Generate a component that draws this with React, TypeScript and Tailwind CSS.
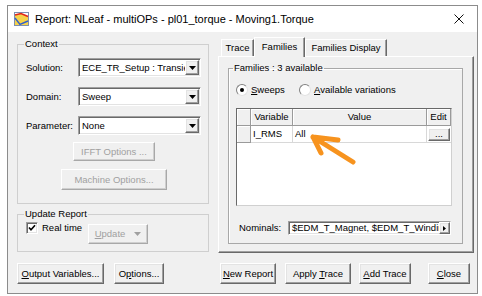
import React from 'react';

const font = "font-['Liberation_Sans',Arial,sans-serif]";

type BoxProps = { className?: string; children?: React.ReactNode; disabled?: boolean };

// classic 3D raised face (buttons, dropdown arrows, header cells)
const Raised = ({ className = '', children, disabled = false }: BoxProps) => (
  <div
    className={`flex items-center justify-center bg-[#f0f0f0] border border-t-white border-l-white whitespace-nowrap ${
      disabled
        ? 'border-r-[#a8a8a8] border-b-[#a8a8a8] shadow-[inset_-1px_-1px_0_#cfcfcf] text-[#a0a0a0]'
        : 'border-r-[#696969] border-b-[#696969] shadow-[inset_-1px_-1px_0_#a0a0a0,inset_1px_1px_0_#e3e3e3]'
    } ${className}`}
  >
    {children}
  </div>
);

const Sunken = ({ className = '', children }: BoxProps) => (
  <div
    className={`bg-white border border-t-[#a0a0a0] border-l-[#a0a0a0] border-r-white border-b-white shadow-[inset_1px_1px_0_#696969,inset_-1px_-1px_0_#e3e3e3] ${className}`}
  >
    {children}
  </div>
);

const DownTri = ({ color = '#000' }: { color?: string }) => (
  <svg width="7" height="4" viewBox="0 0 7 4">
    <polygon points="0,0 7,0 3.5,4" fill={color} />
  </svg>
);

const Combo = ({ value }: { value: string }) => (
  <Sunken className="w-[123px] h-[19px] flex items-center">
    <span className="flex-1 overflow-hidden whitespace-nowrap pl-[3px] leading-[14px]">{value}</span>
    <Raised className="w-[14px] h-[15px] mr-[1px] shrink-0">
      <DownTri />
    </Raised>
  </Sunken>
);

const Radio = ({ checked }: { checked?: boolean }) => (
  <div className="w-[12px] h-[12px] rounded-full bg-white border border-t-[#808080] border-l-[#808080] border-r-[#e3e3e3] border-b-[#e3e3e3] flex items-center justify-center shrink-0">
    {checked && <div className="w-[4px] h-[4px] rounded-full bg-black" />}
  </div>
);

const HeadCell = ({ className = '', children }: BoxProps) => (
  <div className={`h-full flex items-center justify-center bg-[#f0f0f0] border-r border-b border-[#9a9a9a] shadow-[inset_1px_1px_0_white] ${className}`}>
    {children}
  </div>
);

const AppIcon = () => (
  <svg width="15" height="14" viewBox="0 0 15 14">
    <rect x="0.5" y="0.5" width="14" height="13" fill="#fff" stroke="#7d8fb0" />
    <path d="M1 3 L7 1.5 L14 4.5 L14 13 L1 13 Z" fill="#f6d34a" />
    <path d="M1 3 L7 1.5 L14 4.5" stroke="#e0261b" strokeWidth="1.6" fill="none" />
    <path d="M1 6 L6 12.5 L14 9" stroke="#2f5fd0" strokeWidth="1.4" fill="none" />
  </svg>
);

export default function App() {
  return (
    <div className={`relative w-[482px] h-[296px] bg-white pt-[5px] pl-[7px] text-black ${font} text-[9.5px] leading-none`}>
      <div className="w-[471px] h-[289px] border border-[#8c8c8c] flex flex-col">
        {/* Title bar */}
        <div className="h-[26px] bg-white flex items-center pl-[6px] pr-[13px] shrink-0">
          <AppIcon />
          <span className="ml-[6px] text-[11px] flex-1 whitespace-nowrap">
            Report: NLeaf - multiOPs - pl01_torque - Moving1.Torque
          </span>
          <svg width="10" height="10" viewBox="0 0 10 10">
            <path d="M0.5 0.5 L9.5 9.5 M9.5 0.5 L0.5 9.5" stroke="#111" strokeWidth="1" />
          </svg>
        </div>

        <div className="flex-1 bg-[#f0f0f0] flex flex-col">
          <div className="flex h-[221px]">
            {/* Left column */}
            <div className="w-[192px] ml-[9px] flex flex-col">
              <fieldset className="mt-[6px] h-[166px] min-w-0 border border-[#cfcfcf] flex flex-col">
                <legend className="ml-[6px] px-[1px] leading-[12px]">Context</legend>
                <div className="flex items-center h-[19px] mt-[8px] pl-[8px]">
                  <span className="w-[52px]">Solution:</span>
                  <Combo value="ECE_TR_Setup : Transient" />
                </div>
                <div className="flex items-center h-[19px] mt-[10px] pl-[8px]">
                  <span className="w-[52px]">Domain:</span>
                  <Combo value="Sweep" />
                </div>
                <div className="flex items-center h-[19px] mt-[10px] pl-[8px]">
                  <span className="w-[52px]">Parameter:</span>
                  <Combo value="None" />
                </div>
                <Raised disabled className="mt-[7px] ml-[55px] w-[82px] h-[19px]">IFFT Options ...</Raised>
                <Raised disabled className="mt-[8px] ml-[43px] w-[106px] h-[21px]">Machine Options...</Raised>
              </fieldset>

              <fieldset className="mt-[4px] h-[44px] min-w-0 border border-[#cfcfcf] flex flex-col">
                <legend className="ml-[6px] px-[1px] leading-[12px]">Update Report</legend>
                <div className="flex items-start mt-[2px] pl-[8px]">
                  <div className="flex items-center w-[62px] h-[12px]">
                    <Sunken className="w-[12px] h-[12px] flex items-center justify-center shrink-0">
                      <svg width="8" height="8" viewBox="0 0 8 8">
                        <path d="M1 3.5 L3 5.8 L7 1.2" stroke="#000" strokeWidth="1.6" fill="none" />
                      </svg>
                    </Sunken>
                    <span className="ml-[4px] whitespace-nowrap">Real time</span>
                  </div>
                  <Raised disabled className="mt-[2px] w-[60px] h-[20px] gap-[9px]">
                    <span>
                      <u>U</u>pdate
                    </span>
                    <DownTri color="#a0a0a0" />
                  </Raised>
                </div>
              </fieldset>
            </div>

            {/* Right column: tab control */}
            <div className="w-[256px] ml-[9px] flex flex-col">
              <div className="h-[24px] flex items-end pl-[3px] shrink-0">
                <div className="h-[17px] w-[33px] flex items-center justify-center border border-b-0 border-t-white border-l-white border-r-[#696969] shadow-[inset_-1px_0_0_#a0a0a0]">
                  Trace
                </div>
                <div className="relative z-10 -mb-[1px] h-[20px] w-[51px] flex items-start pt-[4px] justify-center bg-[#f0f0f0] border border-b-0 border-t-white border-l-white border-r-[#696969] shadow-[inset_-1px_0_0_#a0a0a0]">
                  Families
                </div>
                <div className="h-[17px] w-[82px] flex items-center justify-center border border-b-0 border-t-white border-l-white border-r-[#696969] shadow-[inset_-1px_0_0_#a0a0a0] whitespace-nowrap">
                  Families Display
                </div>
              </div>

              <div className="h-[197px] border border-t-white border-l-white border-r-[#696969] border-b-[#696969] shadow-[inset_-1px_-1px_0_#a0a0a0] flex flex-col">
                <fieldset className="mt-[5px] ml-[9px] w-[235px] h-[182px] min-w-0 border border-[#a8a8a8] shadow-[inset_1px_1px_0_white] flex flex-col">
                  <legend className="ml-[4px] px-[1px] leading-[12px]">Families : 3 available</legend>

                  <div className="flex items-center h-[12px] mt-[10px] pl-[7px]">
                    <div className="flex items-center w-[63px]">
                      <Radio checked />
                      <span className="ml-[3px]">
                        <u>S</u>weeps
                      </span>
                    </div>
                    <Radio />
                    <span className="ml-[3px] whitespace-nowrap">
                      <u>A</u>vailable variations
                    </span>
                  </div>

                  <div className="ml-[7px] mt-[12px] w-[216px] h-[98px] bg-white border border-t-[#696969] border-l-[#696969] border-r-[#d0d0d0] border-b-[#d0d0d0] flex flex-col">
                    <div className="flex h-[17px]">
                      <HeadCell className="w-[14px]" />
                      <HeadCell className="w-[42px]">Variable</HeadCell>
                      <HeadCell className="w-[134px]">Value</HeadCell>
                      <HeadCell className="w-[24px]">Edit</HeadCell>
                    </div>
                    <div className="flex h-[17px]">
                      <HeadCell className="w-[14px]" />
                      <div className="w-[42px] h-full flex items-center pl-[2px] border-r border-b border-[#d8d8d8]">I_RMS</div>
                      <div className="w-[134px] h-full flex items-center pl-[2px] border-r border-b border-[#d8d8d8]">All</div>
                      <div className="w-[24px] h-full flex items-center justify-center border-b border-[#d8d8d8]">
                        <Raised className="w-[22px] h-[13px]">...</Raised>
                      </div>
                    </div>
                  </div>

                  <div className="flex items-center h-[14px] mt-[15px] pl-[10px]">
                    <span className="w-[49px]">Nominals:</span>
                    <Sunken className="w-[163px] h-[14px] flex items-center">
                      <span className="flex-1 overflow-hidden whitespace-nowrap pl-[3px] leading-[12px]">
                        $EDM_T_Magnet, $EDM_T_Winding
                      </span>
                      <Raised className="w-[11px] h-[12px] shrink-0">
                        <svg width="3" height="5" viewBox="0 0 3 5">
                          <polygon points="0,0 3,2.5 0,5" fill="#000" />
                        </svg>
                      </Raised>
                    </Sunken>
                  </div>
                </fieldset>
              </div>
            </div>
          </div>

          {/* Bottom buttons */}
          <div className="flex mt-[10px] h-[21px]">
            <Raised className="ml-[9px] w-[87px] h-full">
              <span>
                <u>O</u>utput Variables...
              </span>
            </Raised>
            <Raised className="ml-[10px] w-[50px] h-full">
              <span>
                O<u>p</u>tions...
              </span>
            </Raised>
            <Raised className="ml-[56px] w-[56px] h-full">
              <span>
                <u>N</u>ew Report
              </span>
            </Raised>
            <Raised className="ml-[9px] w-[66px] h-full">
              <span>
                Apply <u>T</u>race
              </span>
            </Raised>
            <Raised className="ml-[8px] w-[52px] h-full">
              <span>
                <u>A</u>dd Trace
              </span>
            </Raised>
            <Raised className="ml-[17px] w-[42px] h-full">
              <span>
                <u>C</u>lose
              </span>
            </Raised>
          </div>
        </div>
      </div>

      {/* annotation arrow */}
      <svg className="absolute left-[305px] top-[130px]" width="56" height="40" viewBox="0 0 56 40">
        <path
          d="M48 32 L8 7 M8 7 L33 10 M8 7 L16 23"
          stroke="#f7931e"
          strokeWidth="5"
          strokeLinecap="round"
          strokeLinejoin="round"
          fill="none"
        />
      </svg>
    </div>
  );
}
